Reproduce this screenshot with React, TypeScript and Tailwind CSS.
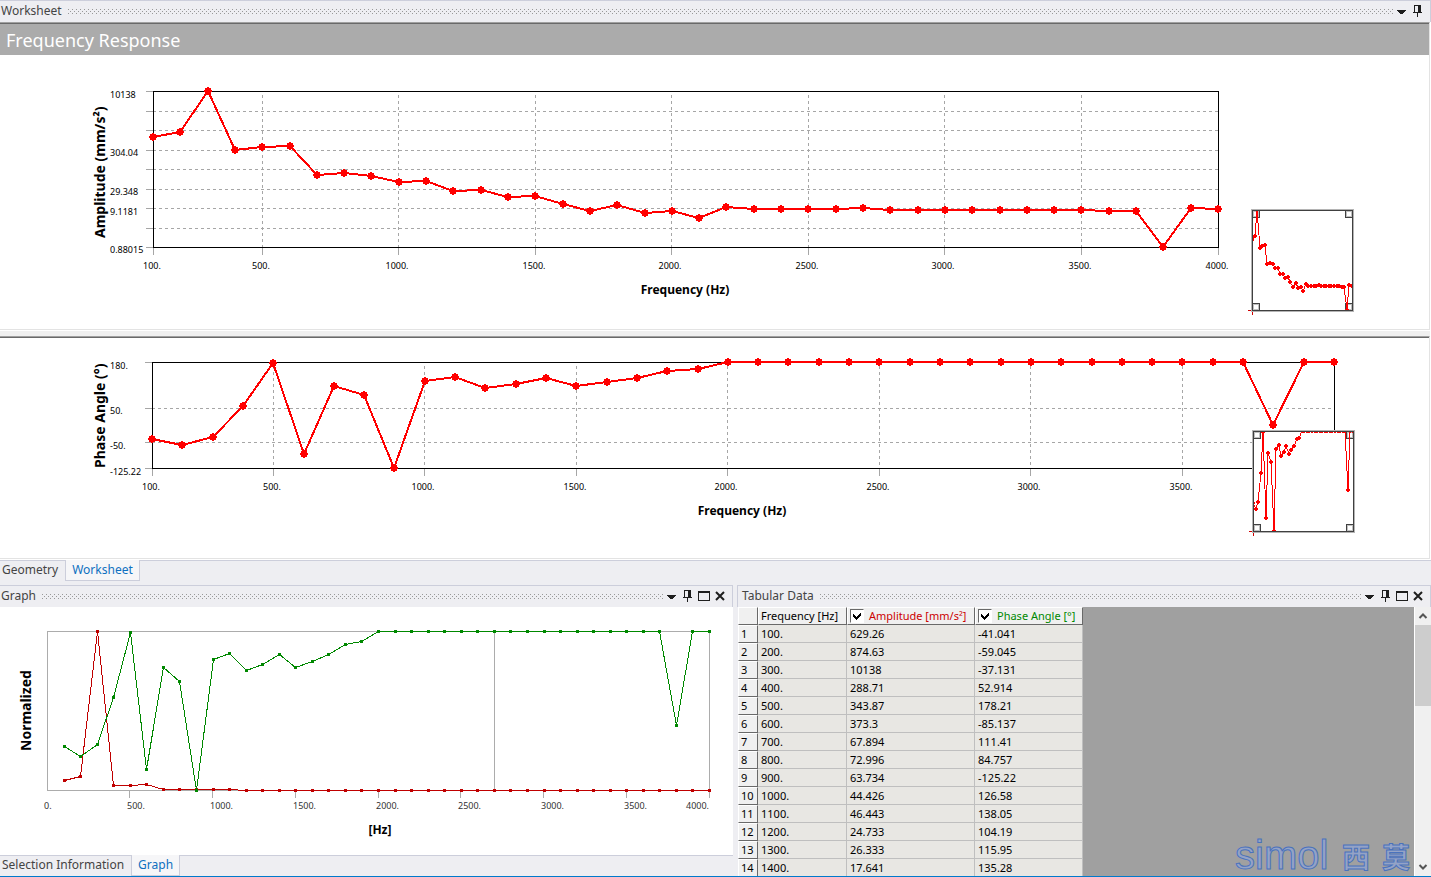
import { ReactNode } from 'react'
import clsx from 'clsx'

interface Sample {
  freq: number
  amp: number
  phase: number
}

interface Point {
  x: number
  y: number
}

const AMPLITUDES = [
  629.26, 874.63, 10138, 288.71, 343.87, 373.3, 67.894, 72.996, 63.734, 44.426,
  46.443, 24.733, 26.333, 17.641, 18.7, 11.59, 7.62, 10.9, 6.76, 7.62,
  5.01, 9.68, 8.59, 8.59, 8.59, 8.59, 9.12, 8.09, 8.09, 8.09,
  8.09, 8.09, 8.09, 8.09, 8.09, 7.62, 7.62, 0.88015, 9.12, 8.59,
]

const PHASES = [
  -41.041, -59.045, -37.131, 52.914, 178.21, -85.137, 111.41, 84.757, -125.22, 126.58,
  138.05, 104.19, 115.95, 135.28, 110.3, 121.9, 135, 154.5, 160, 180,
  180, 180, 180, 180, 180, 180, 180, 180, 180, 180,
  180, 180, 180, 180, 180, 180, 180, -1.2, 180, 180,
]

const SAMPLES: Sample[] = AMPLITUDES.map((amp, i) => ({
  freq: (i + 1) * 100,
  amp,
  phase: PHASES[i],
}))

const AMP_MAX = 10138
const AMP_MIN = 0.88015
const PHASE_MAX = 180
const PHASE_MIN = -125.22

// fraction of the axis height, measured down from the top
const ampLog = (v: number) => Math.log(AMP_MAX / v) / Math.log(AMP_MAX / AMP_MIN)
const ampLinear = (v: number) => (AMP_MAX - v) / (AMP_MAX - AMP_MIN)
const phaseLinear = (v: number) => (PHASE_MAX - v) / (PHASE_MAX - PHASE_MIN)
const freqFraction = (f: number) => (f - 100) / 3900

const toLine = (points: Point[]) => points.map((p) => `${p.x},${p.y}`).join(' ')

function CaretIcon() {
  return (
    <svg viewBox="0 0 16 16" className="h-4 w-4" shapeRendering="crispEdges">
      <path d="M3 7h9v1h-1v1h-1v1h-1v1H6v-1H5V9H4V8H3z" fill="#1e1e1e" />
    </svg>
  )
}

function PinIcon() {
  return (
    <svg viewBox="0 0 16 16" className="h-4 w-4" shapeRendering="crispEdges">
      <path d="M4 2h7v7h1v1H8v4H7v-4H3V9h1zM5 3v6h3V3z" fill="#1e1e1e" fillRule="evenodd" />
    </svg>
  )
}

function MaximizeIcon() {
  return (
    <svg viewBox="0 0 16 16" className="h-4 w-4" shapeRendering="crispEdges">
      <path d="M2 3h12v10H2zM3 5v7h10V5z" fill="#1e1e1e" fillRule="evenodd" />
    </svg>
  )
}

function CloseIcon() {
  return (
    <svg viewBox="0 0 16 16" className="h-4 w-4">
      <path d="M4 4l8 8M12 4l-8 8" stroke="#1e1e1e" strokeWidth="2" />
    </svg>
  )
}

interface TitleBarProps {
  title: string
  full?: boolean
  className?: string
}

function TitleBar({ title, full, className }: TitleBarProps) {
  const id = `grip-${title.replace(' ', '-')}`
  return (
    <div
      className={clsx(
        'flex h-[22px] shrink-0 items-center border-t border-r border-[#ccceDB] bg-[#eeeef2] pr-1 pb-px',
        className
      )}
    >
      <h2 className="text-xs leading-4 text-[#444444]">{title}</h2>
      <svg className="ml-1.5 h-[5px] min-w-0 flex-1" shapeRendering="crispEdges">
        <defs>
          <pattern id={id} width="4" height="4" patternUnits="userSpaceOnUse">
            <rect width="1" height="1" fill="#999999" />
            <rect x="2" y="2" width="1" height="1" fill="#999999" />
          </pattern>
        </defs>
        <rect width="100%" height="5" fill={`url(#${id})`} />
      </svg>
      <div className="flex">
        <button aria-label="Window menu"><CaretIcon /></button>
        <button aria-label="Auto hide"><PinIcon /></button>
        {full && <button aria-label="Maximize"><MaximizeIcon /></button>}
        {full && <button aria-label="Close"><CloseIcon /></button>}
      </div>
    </div>
  )
}

interface TabStripProps {
  tabs: string[]
  active: string
  className?: string
}

function TabStrip({ tabs, active, className }: TabStripProps) {
  return (
    <div role="tablist" className={clsx('flex shrink-0 items-start border-t border-[#ccceDB] bg-[#eeeef2]', className)}>
      {tabs.map((tab) => (
        <button
          key={tab}
          role="tab"
          aria-selected={tab === active}
          className={clsx(
            '-mt-px h-[21px] border-b text-xs leading-4',
            tab === active
              ? 'border-x border-[#ccceDB] bg-[#f6f6f8] px-[6px] text-[#0e70c0]'
              : 'border-transparent pr-[7px] pl-0.5 text-[#444444]'
          )}
        >
          {tab}
        </button>
      ))}
    </div>
  )
}

interface OverviewProps {
  left: number
  top: number
  points: Point[]
}

// Small navigator with a handle in each corner
function Overview({ left, top, points }: OverviewProps) {
  const handles = [
    [0, 0],
    [93, 0],
    [0, 93],
    [93, 93],
  ]
  const scaled = points.map((p) => ({
    x: Math.round(left + p.x * 100),
    y: Math.round(top + p.y * 100),
  }))
  const clip = `overview-${top}`
  return (
    <g shapeRendering="crispEdges">
      <path d={`M${left - 4} ${top + 100.5}h4M${left + 0.5} ${top + 100}v5`} stroke="#d00000" fill="none" />
      <clipPath id={clip}>
        <rect x={left} y={top} width="101" height="101" />
      </clipPath>
      <rect x={left - 0.5} y={top - 0.5} width="102" height="102" fill="#ffffff" stroke="#b4b4b4" />
      {handles.map(([x, y]) => (
        <g key={`${x}-${y}`} fill="none">
          <rect x={left + x + 1.5} y={top + y + 1.5} width="5" height="5" stroke="#c0c0c0" />
          <rect x={left + x + 0.5} y={top + y + 0.5} width="7" height="7" stroke="#404040" />
        </g>
      ))}
      <g clipPath={`url(#${clip})`}>
        <polyline points={toLine(scaled)} fill="none" stroke="#ff0000" />
        {scaled.map((p) => (
          <path key={p.x} d={`M${p.x - 1} ${p.y - 2}h2v1h1v2h-1v1h-2v-1h-1v-2h1z`} fill="#ff0000" />
        ))}
      </g>
      <rect x={left + 0.5} y={top + 0.5} width="100" height="100" fill="none" stroke="#404040" />
    </g>
  )
}

interface ResponseChartProps {
  viewBox: string
  left: number
  right: number
  top: number
  bottom: number
  yTitle: string
  yTitleStart: number
  xTitleX: number
  points: Point[]
  grid: number[]
  yLabels: { text: string; y: number }[]
  xLabels: number[]
  overview: { left: number; top: number }
}

function ResponseChart(props: ResponseChartProps) {
  const { left, right, top, bottom, points, grid, yLabels, xLabels } = props
  const width = right - left
  const height = bottom - top
  const tickX = (f: number) => Math.floor(left + freqFraction(f) * width)
  const scaled = points.map((p) => ({
    x: Math.round(left + p.x * width),
    y: Math.round(top + p.y * height),
  }))

  return (
    <svg viewBox={props.viewBox} className="block h-auto w-full" role="img" aria-label={props.yTitle}>
      <g shapeRendering="crispEdges" fill="none">
        <g stroke="#a6a6a6">
          {grid.map((y) => (
            <line key={y} x1={left} x2={right} y1={y + 0.5} y2={y + 0.5} strokeDasharray="3 3" />
          ))}
          {[500, 1000, 1500, 2000, 2500, 3000, 3500].map((f) => (
            <line key={f} x1={tickX(f) + 0.5} x2={tickX(f) + 0.5} y1={top + 4} y2={bottom} strokeDasharray="3 3" />
          ))}
          {[top, ...grid, bottom].map((y) => (
            <line key={y} x1={left - 7} x2={left} y1={y + 0.5} y2={y + 0.5} />
          ))}
          {[100, 500, 1000, 1500, 2000, 2500, 3000, 3500, 4000].map((f) => (
            <line key={f} x1={tickX(f) + 0.5} x2={tickX(f) + 0.5} y1={bottom} y2={bottom + 8} />
          ))}
        </g>
        <rect x={left + 0.5} y={top + 0.5} width={width} height={height} stroke="#000000" />
      </g>
      <g fill="#ff0000" shapeRendering="crispEdges">
        <polyline points={toLine(scaled)} fill="none" stroke="#ff0000" strokeWidth="2" />
        {scaled.map((p) => (
          <path
            key={p.x}
            d={`M${p.x - 1} ${p.y - 4}h2v1h2v2h1v2h-1v2h-2v1h-2v-1h-2v-2h-1v-2h1v-2h2z`}
          />
        ))}
      </g>
      <g className="text-[9px]">
        {yLabels.map((l) => (
          <text key={l.text} x="110" y={l.y}>{l.text}</text>
        ))}
        {xLabels.map((f) => (
          <text key={f} x={tickX(f) - 1} y={bottom + 22} textAnchor="middle">{f}.</text>
        ))}
      </g>
      <text x={props.xTitleX} y={bottom + 47} textAnchor="middle" className="text-xs font-bold">
        Frequency (Hz)
      </text>
      <text transform={`translate(105 ${props.yTitleStart}) rotate(-90)`} className="text-sm font-bold">
        {props.yTitle}
      </text>
      <Overview {...props.overview} points={points} />
    </svg>
  )
}

function NormalizedGraph() {
  const x = (f: number) => Math.round(47 + (f * 662) / 4000)
  const tickX = (f: number) => Math.floor(47 + (f * 662) / 4000)
  const y = (fraction: number) => Math.round(631 + fraction * 159)
  const series = [
    { color: '#c00000', points: SAMPLES.map((s) => ({ x: x(s.freq), y: y(ampLinear(s.amp)) })) },
    { color: '#008800', points: SAMPLES.map((s) => ({ x: x(s.freq), y: y(phaseLinear(s.phase)) })) },
  ]
  return (
    <svg viewBox="0 607 733 248" className="block h-full w-full bg-white" role="img" aria-label="Normalized">
      <g shapeRendering="crispEdges" fill="none">
        <rect x="47.5" y="631.5" width="662" height="159" stroke="#acacac" />
        <line x1="494.5" x2="494.5" y1="631" y2="790" stroke="#acacac" />
        {[500, 1000, 1500, 2000, 2500, 3000, 3500, 4000].map((f) => (
          <line key={f} x1={tickX(f) + 0.5} x2={tickX(f) + 0.5} y1="790" y2="798" stroke="#acacac" />
        ))}
        {series.map((s) => (
          <g key={s.color}>
            <polyline
              points={toLine(s.points.map((p) => ({ x: p.x + 0.5, y: p.y + 0.5 })))}
              stroke={s.color}
            />
            {s.points.map((p) => (
              <rect key={p.x} x={p.x - 1} y={p.y - 1} width="3" height="3" fill={s.color} />
            ))}
          </g>
        ))}
      </g>
      <g className="text-[9px]" fill="#333333">
        <text x="44" y="809">0.</text>
        {[500, 1000, 1500, 2000, 2500, 3000, 3500].map((f) => (
          <text key={f} x={tickX(f) - 2} y="809">{f}.</text>
        ))}
        <text x="709" y="809" textAnchor="end">4000.</text>
      </g>
      <text x="380" y="834" textAnchor="middle" className="text-xs font-bold">[Hz]</text>
      <text transform="translate(31 751) rotate(-90)" className="text-sm font-bold">Normalized</text>
    </svg>
  )
}

interface HeaderCellProps {
  className?: string
  children?: ReactNode
}

function HeaderCell({ className, children }: HeaderCellProps) {
  return (
    <th
      className={clsx(
        'border-t border-r border-b border-l border-t-white border-r-[#696969] border-b-[#696969] border-l-white bg-[#f0f0f0] p-0 pl-0.5 text-left font-normal whitespace-nowrap',
        className
      )}
    >
      {children}
    </th>
  )
}

function SeriesToggle({ label }: { label: string }) {
  return (
    <label className="flex items-center gap-[5px]">
      <span className="relative block h-[14px] w-[14px]">
        <input
          type="checkbox"
          defaultChecked
          className="peer block h-[14px] w-[14px] appearance-none border border-t-[#696969] border-r-white border-b-white border-l-[#696969] bg-white"
        />
        <svg
          viewBox="0 0 14 14"
          className="pointer-events-none absolute inset-0 hidden peer-checked:block"
          shapeRendering="crispEdges"
        >
          <path
            d="M3 5h1v1h1v1h1v1h1V7h1V6h1V5h1V4h1v3h-1v1H9v1H8v1H7v1H6v-1H5V9H4V8H3z"
            fill="#000000"
          />
        </svg>
      </span>
      <span>{label}</span>
    </label>
  )
}

function DataTable() {
  const cell = 'border-r border-b border-[#bfbfbf] bg-[#e8e7e3] p-0 pl-[3px]'
  return (
    <table className="w-[345px] shrink-0 table-fixed border-separate border-spacing-0 self-start text-[11px] leading-4">
      <colgroup>
        <col className="w-5" />
        <col className="w-[89px]" />
        <col className="w-32" />
        <col className="w-[108px]" />
      </colgroup>
      <thead>
        <tr className="h-[18px]">
          <HeaderCell />
          <HeaderCell>Frequency [Hz]</HeaderCell>
          <HeaderCell className="text-[#cc0000]"><SeriesToggle label="Amplitude [mm/s²]" /></HeaderCell>
          <HeaderCell className="text-[#008800]"><SeriesToggle label="Phase Angle [°]" /></HeaderCell>
        </tr>
      </thead>
      <tbody>
        {SAMPLES.slice(0, 14).map((s, i) => (
          <tr key={s.freq} className="h-[18px]">
            <HeaderCell>{i + 1}</HeaderCell>
            <td className={cell}>{s.freq}.</td>
            <td className={cell}>{s.amp}</td>
            <td className={cell}>{s.phase}</td>
          </tr>
        ))}
      </tbody>
    </table>
  )
}

function ScrollBar() {
  return (
    <div className="flex w-[17px] shrink-0 flex-col border-l border-white bg-[#f0f0f0]">
      <button aria-label="Scroll up" className="flex h-[18px] items-center justify-center">
        <svg viewBox="0 0 10 10" className="h-2.5 w-2.5">
          <path d="M1.5 7L5 3.5 8.5 7" fill="none" stroke="#555555" strokeWidth="2" />
        </svg>
      </button>
      <div className="min-h-0 flex-1">
        <div className="h-[81px] bg-[#cdcdcd]" />
      </div>
      <button aria-label="Scroll down" className="flex h-[18px] items-center justify-center">
        <svg viewBox="0 0 10 10" className="h-2.5 w-2.5">
          <path d="M1.5 3L5 6.5 8.5 3" fill="none" stroke="#555555" strokeWidth="2" />
        </svg>
      </button>
    </div>
  )
}

function Watermark() {
  return (
    <svg
      viewBox="0 0 180 60"
      className="pointer-events-none absolute right-0 bottom-0 h-[60px] w-[180px] overflow-visible"
      fill="#94a3c6"
      stroke="#4a72bd"
    >
      <text x="1" y="53" className="font-['Liberation_Sans',sans-serif] text-[40px]">simol</text>
      <g className="font-['Noto_Sans_CJK_SC','Noto_Sans',sans-serif] text-[28px] font-bold">
        <text x="108" y="52">西</text>
        <text x="148" y="52">莫</text>
      </g>
    </svg>
  )
}

export default function App() {
  const ampPoints = SAMPLES.map((s) => ({ x: freqFraction(s.freq), y: ampLog(s.amp) }))
  const phasePoints = SAMPLES.map((s) => ({ x: freqFraction(s.freq), y: phaseLinear(s.phase) }))

  return (
    <div className="flex h-screen flex-col overflow-hidden border-b border-[#007acc] bg-[#eeeef2] font-['Noto_Sans','Open_Sans',sans-serif] text-black">
      <TitleBar title="Worksheet" className="pl-px" />
      <main className="shrink-0 bg-white pr-px pb-px">
        <section className="border-t border-r border-b border-t-[#a0a0a0] border-r-[#e3e3e3] border-b-[#e3e3e3]">
          <h1 className="border-t border-[#696969] bg-[#ababab] pt-px pl-1.5 text-lg leading-[30px] text-white">
            Frequency Response
          </h1>
          <ResponseChart
            viewBox="0 55 1429 274"
            left={153}
            right={1218}
            top={91}
            bottom={247}
            yTitle="Amplitude (mm/s²)"
            yTitleStart={238}
            xTitleX={685}
            points={ampPoints}
            grid={[111, 130, 150, 169, 189, 208, 228]}
            yLabels={[
              { text: '10138', y: 98 },
              { text: '304.04', y: 156 },
              { text: '29.348', y: 195 },
              { text: '9.1181', y: 215 },
              { text: '0.88015', y: 253 },
            ]}
            xLabels={[100, 500, 1000, 1500, 2000, 2500, 3000, 3500, 4000]}
            overview={{ left: 1252, top: 210 }}
          />
        </section>
        <div className="mt-px h-[5px] bg-[#f0f0f0]" />
        <section className="border-t border-r border-b border-t-[#a0a0a0] border-r-[#e3e3e3] border-b-[#e3e3e3]">
          <div className="border-t border-[#696969]">
            <ResponseChart
              viewBox="0 338 1429 220"
              left={152}
              right={1334}
              top={362}
              bottom={468}
              yTitle="Phase Angle (°)"
              yTitleStart={468}
              xTitleX={742}
              points={phasePoints}
              grid={[408, 442]}
              yLabels={[
                { text: '180.', y: 369 },
                { text: '50.', y: 414 },
                { text: '-50.', y: 449 },
                { text: '-125.22', y: 475 },
              ]}
              xLabels={[100, 500, 1000, 1500, 2000, 2500, 3000, 3500]}
              overview={{ left: 1253, top: 431 }}
            />
          </div>
        </section>
      </main>
      <TabStrip tabs={['Geometry', 'Worksheet']} active="Worksheet" className="h-[25px]" />
      <div className="flex min-h-0 flex-1 gap-1">
        <section className="flex min-w-0 flex-[733] flex-col">
          <TitleBar title="Graph" full className="pl-px" />
          <div className="min-h-0 flex-1">
            <NormalizedGraph />
          </div>
          <TabStrip tabs={['Selection Information', 'Graph']} active="Graph" className="h-[21px]" />
        </section>
        <section className="flex min-w-0 flex-[694] flex-col">
          <TitleBar title="Tabular Data" full className="border-l pl-1" />
          <div className="flex min-h-0 flex-1 overflow-hidden pl-px">
            <div className="relative flex min-w-0 flex-1 overflow-hidden bg-[#a0a0a0]">
              <DataTable />
              <Watermark />
            </div>
            <ScrollBar />
          </div>
        </section>
      </div>
    </div>
  )
}
